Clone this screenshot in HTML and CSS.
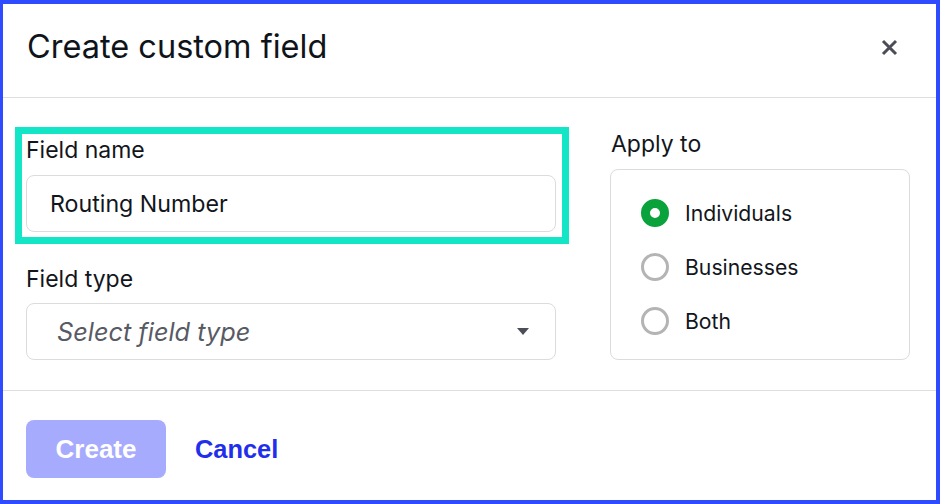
FILE: index.html
```html
<!DOCTYPE html>
<html lang="en">
<head>
<meta charset="utf-8">
<title>Create custom field</title>
<link rel="stylesheet" href="styles.css">
</head>
<body>
<div class="dialog">
  <header class="dialog-header">
    <h1 class="dialog-title">Create custom field</h1>
    <button class="close-btn" aria-label="Close">
      <svg width="17" height="17" viewBox="0 0 17 17"><path d="M2 2 L15 15 M15 2 L2 15" stroke="#4b4d57" stroke-width="3" fill="none"/></svg>
    </button>
  </header>
  <main class="dialog-body">
    <div class="col-left">
      <div class="highlight">
        <label class="field-label name-label">Field name</label>
        <div class="input"><span class="input-value">Routing Number</span></div>
      </div>
      <label class="field-label type-label">Field type</label>
      <div class="select">
        <span class="placeholder">Select field type</span>
        <span class="caret"></span>
      </div>
    </div>
    <div class="col-right">
      <div class="field-label apply-label">Apply to</div>
      <div class="radio-box">
        <div class="radio-row"><span class="radio checked"></span><span class="radio-text">Individuals</span></div>
        <div class="radio-row"><span class="radio"></span><span class="radio-text">Businesses</span></div>
        <div class="radio-row"><span class="radio"></span><span class="radio-text">Both</span></div>
      </div>
    </div>
  </main>
  <footer class="dialog-footer">
    <button class="btn-create">Create</button>
    <button class="btn-cancel">Cancel</button>
  </footer>
</div>
</body>
</html>
```
FILE: styles.css
```css
* { box-sizing: border-box; }
html, body { margin: 0; padding: 0; }
body {
  width: 940px;
  height: 504px;
  background: #ffffff;
  font-family: Inter, "Noto Sans", sans-serif;
  color: #12161c;
}
.dialog {
  height: 504px;
  border: 4px solid #2f4bff;
  border-left-width: 3px;
  display: flex;
  flex-direction: column;
}
.dialog-header {
  height: 94px;
  border-bottom: 1px solid #dedede;
  display: flex;
  align-items: center;
  justify-content: space-between;
  padding: 0 38px 7px 24px;
}
.dialog-title {
  margin: 0;
  font-size: 32.5px;
  line-height: 40px;
  font-weight: 400;
  color: #0f141b;
}
.close-btn {
  border: 0;
  background: none;
  padding: 0;
  width: 17px;
  height: 17px;
  display: flex;
}
.dialog-body {
  height: 293px;
  border-bottom: 1px solid #dedede;
  display: flex;
  gap: 54px;
  padding: 29px 26px 0 23px;
}
.col-left {
  width: 530px;
  display: flex;
  flex-direction: column;
}
.highlight {
  border: 7px solid #12e6c6;
  margin: 0 -13px 0 -11px;
  padding: 2px 6px 5px 4px;
  display: flex;
  flex-direction: column;
}
.field-label {
  font-size: 23px;
  line-height: 28px;
  color: #12161c;
}
.name-label { margin-bottom: 11px; }
.type-label {
  margin-top: 21px;
  margin-bottom: 10px;
}
.input, .select {
  height: 57px;
  border: 1px solid #dcdcdc;
  border-radius: 8px;
  display: flex;
  align-items: center;
}
.input { padding-left: 23px; }
.input-value { font-size: 23.2px; color: #12161c; }
.select {
  padding-left: 30px;
  padding-right: 26px;
  justify-content: space-between;
}
.placeholder {
  font-size: 25.3px;
  font-style: italic;
  color: #585a64;
}
.caret {
  width: 0;
  height: 0;
  border-left: 6.5px solid transparent;
  border-right: 6.5px solid transparent;
  border-top: 7px solid #4b4d57;
}
.col-right {
  width: 300px;
  display: flex;
  flex-direction: column;
}
.apply-label {
  margin-top: 3px;
  margin-bottom: 11px;
  padding-left: 1px;
}
.radio-box {
  height: 191px;
  border: 1px solid #dcdcdc;
  border-radius: 8px;
  padding: 29px 0 0 30px;
  display: flex;
  flex-direction: column;
  gap: 26px;
}
.radio-row {
  display: flex;
  align-items: center;
  gap: 16px;
  height: 28px;
}
.radio {
  width: 28px;
  height: 28px;
  border-radius: 50%;
  border: 3px solid #b4b4b4;
  flex: none;
}
.radio.checked {
  border: 9px solid #0aa23b;
}
.radio-text {
  font-size: 21.2px;
  color: #12161c;
}
.dialog-footer {
  flex: 1;
  display: flex;
  align-items: flex-start;
  padding: 29px 23px 0;
  gap: 29px;
}
.btn-create {
  width: 140px;
  height: 58px;
  border: 0;
  border-radius: 8px;
  background: #a6abfe;
  color: #ffffff;
  font-family: "Liberation Sans", Arial, sans-serif;
  font-weight: 700;
  font-size: 26px;
}
.btn-cancel {
  height: 58px;
  border: 0;
  background: none;
  padding: 0;
  color: #1f2fec;
  font-family: "Liberation Sans", Arial, sans-serif;
  font-weight: 700;
  font-size: 25.4px;
}
```
